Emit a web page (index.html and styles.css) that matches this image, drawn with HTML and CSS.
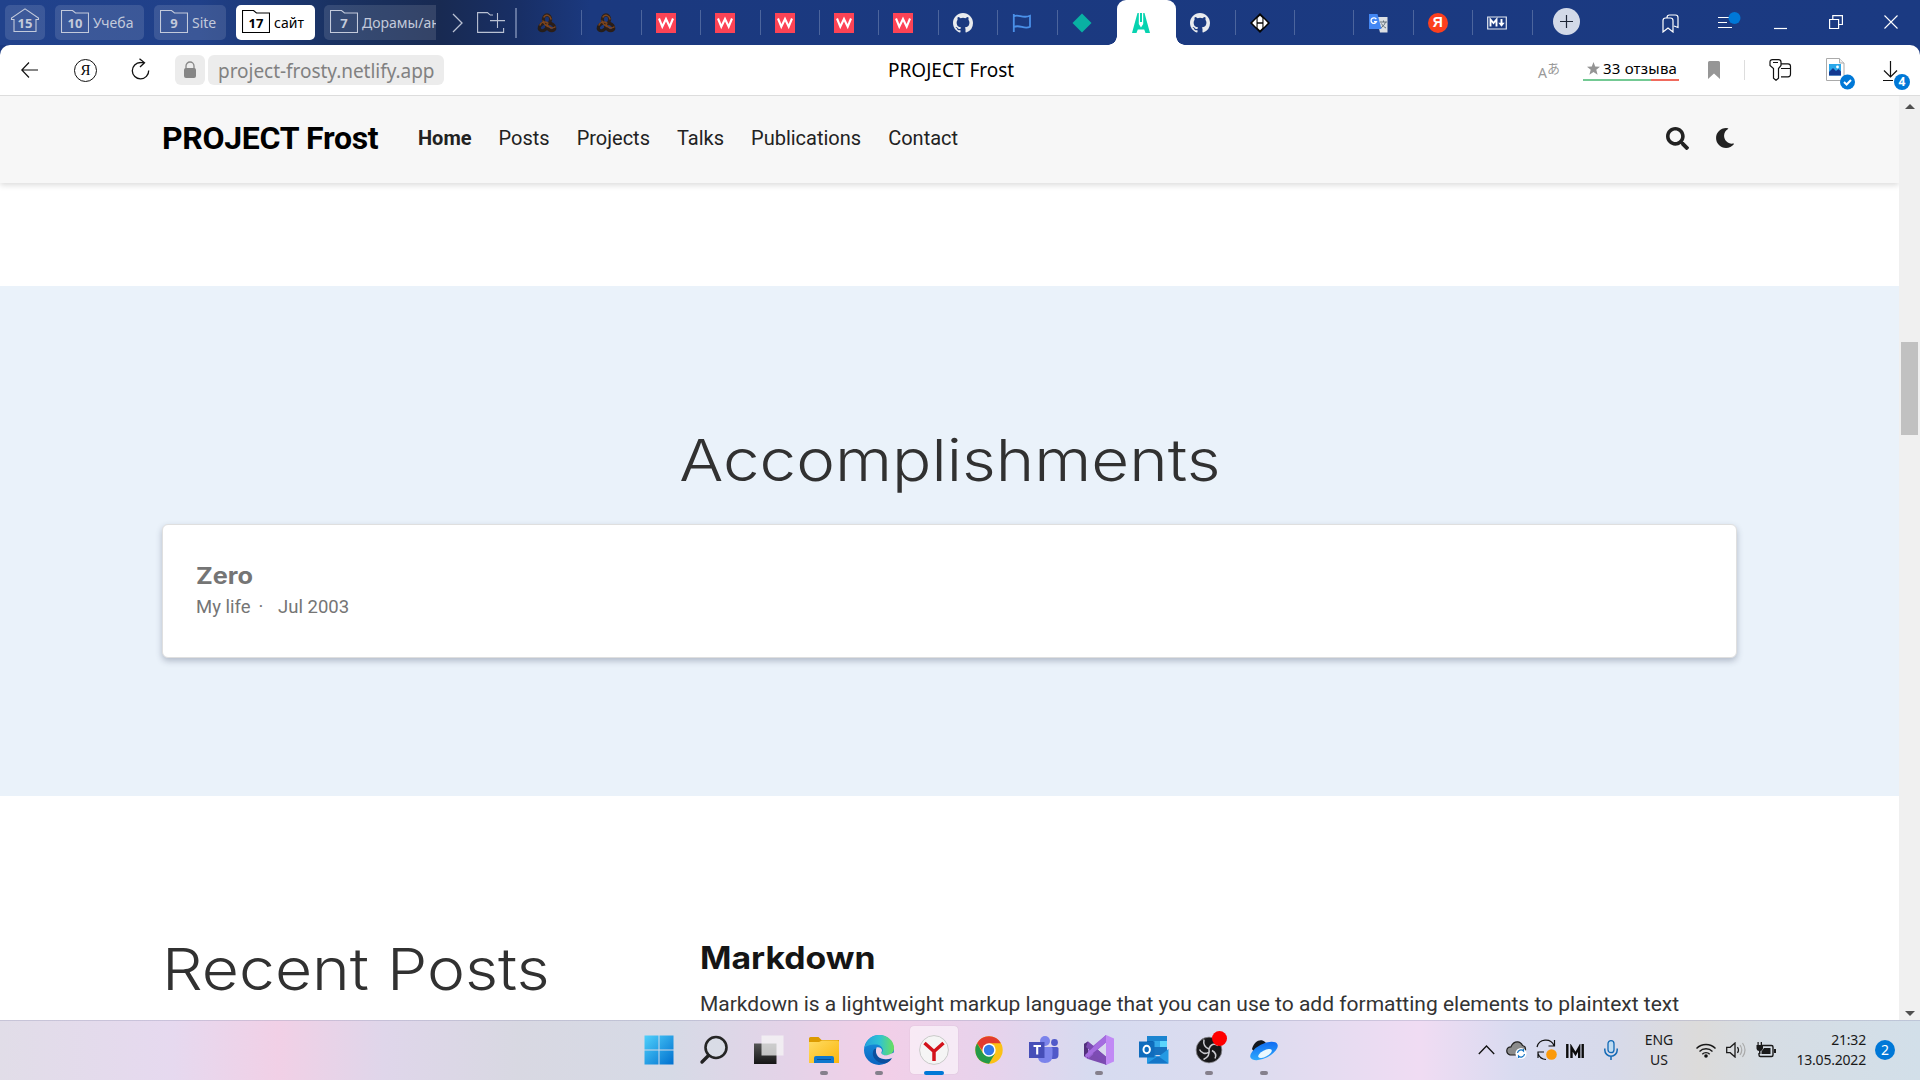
FILE: index.html
```html
<!DOCTYPE html>
<html lang="en">
<head>
<meta charset="utf-8">
<title>PROJECT Frost</title>
<link rel="stylesheet" href="styles.css">
</head>
<body>
<svg class="defs" width="0" height="0">
  <defs>
    <linearGradient id="g-win" x1="0" y1="0" x2="1" y2="1"><stop offset="0" stop-color="#4fd0fb"/><stop offset="1" stop-color="#0070cf"/></linearGradient>
    <linearGradient id="g-dark" x1="0" y1="0" x2="0" y2="1"><stop offset="0" stop-color="#555"/><stop offset="1" stop-color="#151515"/></linearGradient>
    <linearGradient id="g-fold" x1="0" y1="0" x2="1" y2="1"><stop offset="0" stop-color="#ffdc63"/><stop offset="1" stop-color="#fbb60c"/></linearGradient>
    <linearGradient id="g-edge" x1="0" y1="0" x2="1" y2="0"><stop offset="0" stop-color="#24a0dd"/><stop offset=".5" stop-color="#2fc2d4"/><stop offset="1" stop-color="#6be05b"/></linearGradient>
    <linearGradient id="g-edge2" x1="0" y1="0" x2="0" y2="1"><stop offset="0" stop-color="#1a97e0"/><stop offset="1" stop-color="#0a63c0"/></linearGradient>
    <linearGradient id="g-disk" x1="0" y1="1" x2="1" y2="0"><stop offset="0" stop-color="#35b6ff"/><stop offset="1" stop-color="#0a5ff0"/></linearGradient>
    <symbol id="folder" viewBox="0 0 28 24"><path d="M.5 .5h11l3 2.500h13v19.500H.5z" fill="none" stroke="currentColor" stroke-width="1.100"/></symbol>
    <symbol id="github" viewBox="0 0 16 16"><path fill="#e9ebee" d="M8 0C3.580 0 0 3.580 0 8c0 3.540 2.290 6.530 5.470 7.590.4.070.55-.17.55-.38 0-.19-.01-.82-.01-1.490-2.010.37-2.530-.49-2.690-.94-.09-.23-.48-.94-.82-1.130-.28-.15-.68-.52-.01-.53.63-.01 1.080.58 1.230.82.72 1.210 1.870.87 2.330.66.07-.52.28-.87.51-1.070-1.780-.2-3.640-.89-3.640-3.950 0-.87.31-1.590.82-2.150-.08-.2-.36-1.020.08-2.120 0 0 .67-.21 2.200.82a7.600 7.600 0 0 1 4 0c1.530-1.040 2.200-.82 2.200-.82.44 1.100.16 1.920.08 2.120.51.56.82 1.270.82 2.150 0 3.070-1.870 3.750-3.650 3.950.29.25.54.73.54 1.480 0 1.070-.01 1.930-.01 2.200 0 .21.15.46.55.38A8.010 8.010 0 0 0 16 8c0-4.420-3.580-8-8-8z"/></symbol>
    <symbol id="wsite" viewBox="0 0 20 20"><path fill="#fd4355" d="M0 0h20v20H0z"/><path d="M3 5.500l3.300 8.200L10 6l3.700 7.700L17 5.500" fill="none" stroke="#fff" stroke-width="2.100"/></symbol>
    <symbol id="knot" viewBox="0 0 20 20"><g fill="none" stroke-linecap="round"><ellipse cx="10" cy="6.300" rx="3.600" ry="4.400" stroke="#2e211a" stroke-width="3.200"/><ellipse cx="6.300" cy="14" rx="4.400" ry="3.200" transform="rotate(-35 6.300 14)" stroke="#251d1a" stroke-width="3.200"/><ellipse cx="13.700" cy="14" rx="4.400" ry="3.200" transform="rotate(35 13.700 14)" stroke="#2b1d17" stroke-width="3.200"/><path d="M7 4c2-3 6-2 7 2M3 12c1-3 5-4 8-2M10 11c2 4 5 5 8 3M6 8c1 3 4 6 7 6" stroke="#7c451f" stroke-width="1.500"/></g></symbol>
  </defs>
</svg>

<div class="screen">
  <header class="tabstrip">
    <div class="group group-home"><svg width="30" height="25" viewBox="0 0 30 25"><path d="M1.500 11.500V10L15 .8 28.500 10v1.500H26V23.500H4V11.500z" fill="none" stroke="currentColor" stroke-width="1.100"/></svg><b>15</b></div>
    <div class="group g1"><span class="count"><svg><use href="#folder"/></svg><b>10</b></span><span class="label">Учеба</span></div>
    <div class="group g2"><span class="count"><svg><use href="#folder"/></svg><b>9</b></span><span class="label">Site</span></div>
    <div class="group g3 selected"><span class="count"><svg><use href="#folder"/></svg><b>17</b></span><span class="label">сайт</span></div>
    <div class="group g4"><span class="count"><svg><use href="#folder"/></svg><b>7</b></span><span class="label">Дорамы/ан</span></div>
    <svg class="next" width="11" height="20" viewBox="0 0 11 20"><path d="M1 1l9 9-9 9" fill="none" stroke="#b9c1d3" stroke-width="1.300"/></svg>
    <svg class="addgroup" width="29" height="22" viewBox="0 0 29 22"><path d="M13 2.800L10.500.6H.6v19.800h26V16M16 3h-3M20.500 1v15M13 8.600h15" fill="none" stroke="#b9c1d3" stroke-width="1.100"/></svg>
    <nav class="tabs">
      <div class="tab"><svg><use href="#knot"/></svg></div>
      <div class="tab"><svg><use href="#knot"/></svg></div>
      <div class="tab"><svg><use href="#wsite"/></svg></div>
      <div class="tab"><svg><use href="#wsite"/></svg></div>
      <div class="tab"><svg><use href="#wsite"/></svg></div>
      <div class="tab"><svg><use href="#wsite"/></svg></div>
      <div class="tab"><svg><use href="#wsite"/></svg></div>
      <div class="tab"><svg><use href="#github"/></svg></div>
      <div class="tab"><svg viewBox="0 0 20 20"><path d="M1.800 1v18M1.800 3.500c4-3 9 2.500 16.200-.7v11C12 17 8 11 1.800 14" fill="none" stroke="#4a90e8" stroke-width="1.800"/></svg></div>
      <div class="tab last"><svg viewBox="0 0 20 20"><path d="M10 .5l9.500 9.500-9.500 9.500L.5 10z" fill="#09b1a3"/></svg></div>
      <div class="tab active"><svg viewBox="0 0 20 20"><path d="M6.500 0L1 20h4.500l1.300-3.500h6.400l1.300 3.500H19L13.500 0h-1.300v11L10 14.500 7.800 11V0zM9 0h2v9H9z" fill="#07d3b0"/></svg></div>
      <div class="tab"><svg><use href="#github"/></svg></div>
      <div class="tab"><svg viewBox="0 0 20 20"><path d="M10 0l10 10-10 10L0 10z" fill="#050505"/><path d="M6.500 5.500v9L2.200 10zM13.500 5.500v9l4.300-4.500z" fill="#fff"/><path d="M10 2.800L12.400 5v4.200H7.600V5zM7.600 10.800h4.800V15L10 17.200 7.600 15z" fill="#fff"/></svg></div>
      <div class="tab"></div>
      <div class="tab"><svg viewBox="0 0 20 20"><path d="M8 4h11.500v15.500H12z" fill="#dcdfe3"/><path d="M12 9h7M15.500 7.500V9M17.500 9c-1 3-3 5-5 6M13.500 10.500c1 2 2.500 3.500 4.500 4.500" stroke="#63717b" fill="none"/><path d="M1 1h8.500l4 15H1z" fill="#4387f4"/><path d="M8.300 6.200A2.800 2.800 0 1 0 8.500 8.600H6" fill="none" stroke="#fff" stroke-width="1.300"/></svg></div>
      <div class="tab"><span class="ya-tab">Я</span></div>
      <div class="tab"><svg viewBox="0 0 20 20"><path d="M.7 4h18.600v12H.7z" fill="none" stroke="#e4e8f0" stroke-width="1.200"/><path d="M3.500 13.500v-7L6.500 10l3-3.500v7M14.500 6v4" fill="none" stroke="#fff" stroke-width="1.900"/><path d="M11.300 9.800h6.400l-3.200 4z" fill="#fff"/></svg></div>
    </nav>
    <svg class="newtab" width="27" height="27" viewBox="0 0 27 27"><circle cx="13.500" cy="13.500" r="13.500" fill="#d2d9e8"/><path d="M7 13.500h13M13.500 7v13" stroke="#1c2536" stroke-width="1.200"/></svg>
    <svg class="win-marks" width="17" height="19" viewBox="0 0 17 19"><path d="M1 6.500q0-2.500 2.500-2.500h5q2.500 0 2.500 2.500V18l-5-4-5 4zM5 3.500Q5 1 7.500 1h6Q16 1 16 3.500v10l-4-1.500" fill="none" stroke="#fff" stroke-width="1.200"/></svg>
    <svg class="win-menu" width="23" height="18" viewBox="0 0 23 18"><path d="M0 5.500h11M0 10.500h9M0 15.500h14" stroke="#fff" stroke-width="1.200"/><circle cx="16.500" cy="6" r="6" fill="#0078d7"/></svg>
    <svg class="win-min" width="13" height="14" viewBox="0 0 13 14"><path d="M0 12.500h13" stroke="#fff" stroke-width="1.200"/></svg>
    <svg class="win-max" width="14" height="14" viewBox="0 0 14 14"><path d="M.6 4.500h9v9h-9zM3.800 4.500V.6h9.600v8.900H9.600" fill="none" stroke="#fff" stroke-width="1.200"/></svg>
    <svg class="win-close" width="14" height="14" viewBox="0 0 14 14"><path d="M.5.5l13 13M13.500.5l-13 13" stroke="#fff" stroke-width="1.100"/></svg>
  </header>

  <div class="toolbar">
    <svg class="t-back" width="17" height="16" viewBox="0 0 17 16"><path d="M8 .5L.8 8 8 15.500M1 8h16" fill="none" stroke="#111" stroke-width="1.200"/></svg>
    <span class="t-ya">Я</span>
    <svg class="t-reload" width="19" height="22" viewBox="0 0 19 22"><path d="M9.500 4.500A8.200 8.200 0 1 0 17.700 12.500M8.500.7l5 4-4.500 4.200M13.500 4.600h-4" fill="none" stroke="#111" stroke-width="1.300"/></svg>
    <span class="t-lock"><svg width="14" height="18" viewBox="0 0 14 18"><path d="M3 8V5a4 4 0 0 1 8 0v3" fill="none" stroke="#888" stroke-width="1.300"/><rect x="1" y="7" width="12" height="10" rx="2" fill="#868686"/></svg></span>
    <span class="t-url">project-frosty.netlify.app</span>
    <span class="t-title">PROJECT Frost</span>
    <span class="t-trans"><span>A</span><sup>あ</sup></span>
    <span class="t-rating"><svg width="13" height="13" viewBox="0 0 13 13"><path d="M6.500 0l1.700 4.500 4.800.3-3.700 3 1.300 4.900-4.100-2.700-4.100 2.700 1.300-4.900L0 4.800l4.800-.3z" fill="#949494"/></svg><span>33 отзыва</span></span>
    <svg class="t-mark" width="12" height="18" viewBox="0 0 12 18"><path d="M0 1.500Q0 0 1.500 0h9Q12 0 12 1.500V18l-6-5.500L0 18z" fill="#969696"/></svg>
    <span class="t-sep"></span>
    <svg class="t-key" width="23" height="22" viewBox="0 0 23 22"><path d="M1 3Q1 .7 3.500.7h6Q12 .7 12 3v3.500L9.500 9.500v9.800L7 21.300 4.500 19.300V9.500L1 6.500zM4 3.500h5M12 4.800h7q2.500 0 2.500 2.500v8q0 2.500-2.500 2.500h-7M12 9.500h9.500" fill="none" stroke="#111" stroke-width="1.200"/></svg>
    <svg class="t-img" width="30" height="32" viewBox="0 0 30 32"><path d="M.5.500h13l4.500 4.500v17.500H.5z" fill="#fff" stroke="#aaa"/><path d="M13.500.500V5H18" fill="#eee" stroke="#aaa"/><path d="M3 6h12v11.500H3z" fill="#29a7ea"/><path d="M3 14l4-4 3 3 2.500-2 2.500 2.500v4H3z" fill="#143a91"/><circle cx="11.500" cy="9" r="1.400" fill="#fff"/><circle cx="21.500" cy="24" r="7.500" fill="#0078d7"/><path d="M18 24l2.600 2.500L25 22" fill="none" stroke="#fff" stroke-width="2"/></svg>
    <span class="t-down"><svg width="15" height="21" viewBox="0 0 15 21"><path d="M7.500 0v16M1 9.500L7.500 16 14 9.500M0 19.500h10" fill="none" stroke="#111" stroke-width="1.200"/></svg><b>4</b></span>
  </div>

  <main class="viewport">
    <div class="page">
      <nav class="navbar">
        <span class="brand">PROJECT Frost</span>
        <ul class="menu">
          <li class="current">Home</li><li>Posts</li><li>Projects</li><li>Talks</li><li>Publications</li><li>Contact</li>
        </ul>
        <svg class="n-search" width="23" height="23" viewBox="0 0 512 512"><path fill="#222" d="M505 442.700L405.300 343c-4.500-4.500-10.600-7-17-7H372c27.600-35.300 44-79.700 44-128C416 93.100 322.900 0 208 0S0 93.100 0 208s93.100 208 208 208c48.300 0 92.700-16.400 128-44v16.300c0 6.400 2.500 12.500 7 17l99.700 99.700c9.400 9.400 24.600 9.400 33.900 0l28.300-28.300c9.400-9.400 9.400-24.600.1-34zM208 336c-70.700 0-128-57.200-128-128 0-70.700 57.200-128 128-128 70.700 0 128 57.200 128 128 0 70.700-57.200 128-128 128z"/></svg>
        <svg class="n-moon" width="20" height="20" viewBox="0 0 512 512"><path fill="#222" d="M283.211 512c78.962 0 151.079-35.925 198.857-94.792 7.068-8.708-.639-21.430-11.562-19.350-124.203 23.654-238.262-71.576-238.262-196.954 0-72.222 38.662-138.635 101.498-174.394 9.686-5.512 7.250-20.197-3.756-22.230A258.156 258.156 0 0 0 283.211 0c-141.309 0-256 114.511-256 256 0 141.309 114.511 256 256 256z"/></svg>
      </nav>
      <section class="accomplishments">
        <h1><span>Accomplishments</span></h1>
        <article class="card">
          <h3><span>Zero</span></h3>
          <p><span>My life</span><span class="dot">·</span><span>Jul 2003</span></p>
        </article>
      </section>
      <section class="posts">
        <h1><span>Recent Posts</span></h1>
        <article class="post">
          <h3><span>Markdown</span></h3>
          <p>Markdown is a lightweight markup language that you can use to add formatting elements to plaintext text</p>
        </article>
      </section>
    </div>
    <div class="scrollbar"><i class="up"></i><i class="thumb"></i><i class="down"></i></div>
  </main>

  <footer class="taskbar">
    <div class="apps">
      <div class="app"><svg viewBox="0 0 30 30"><path d="M.5.500h14v14H.5zM15.500.500h14v14h-14zM.5 15.500h14v14H.5zM15.500 15.500h14v14h-14z" fill="url(#g-win)"/></svg></div>
      <div class="app"><svg viewBox="0 0 30 30"><circle cx="17" cy="12.500" r="10.500" fill="#d9dce6" stroke="#252525" stroke-width="2.600"/><path d="M9.500 20.500l-6.500 6.500" stroke="#222" stroke-width="3.400" stroke-linecap="round"/></svg></div>
      <div class="app"><svg viewBox="0 0 30 30"><path d="M0 8.500h22.500V29H0z" fill="url(#g-dark)"/><path d="M7.500 0.500h22V20.500h-22z" fill="#f6f6f6" opacity=".75"/></svg></div>
      <div class="app run"><svg viewBox="0 0 30 30"><path d="M0 3.500Q0 2 1.500 2h8l3 3H30v5H0z" fill="#dc9b00"/><path d="M0 7h10l3-1.500h15.500Q30 5.500 30 7v21H0z" fill="url(#g-fold)"/><path d="M5 28v-5q0-2 2-2h16q2 0 2 2v5z" fill="#0f77cd"/><path d="M8 24.500h14" stroke="#064f94"/></svg></div>
      <div class="app run"><svg viewBox="0 0 30 30"><circle cx="15" cy="15" r="15" fill="url(#g-edge2)"/><path d="M.3 13C2 5 8 0 15 0c9 0 15 6 15 13 0 5-4 7.500-8 7.500-3 0-4.500-1.200-4.500-2.200 0-.8 1.300-1.300 1.300-3.300 0-3-3-5.500-7-5.500C6 9.500 2 11 .3 13z" fill="url(#g-edge)"/><path d="M10.500 14c-2 2-2.500 6 0 9.500s7 5.500 12 4.500c2.500-1 4.500-3 5.500-5-6 3-13 1-15-3-1-2-1-4.500.5-6.500z" fill="#0b4f9e"/><path d="M12.500 12.500c3 -.8 5.500 1 5.500 3 0 1-1 2-.5 3 1 1.800 4 2 6.500 1.500l6-2.500v3l-2 2.500c-5 2-11 1.500-14-1.500-2-2.500-2.700-5.500-1.500-9z" fill="#edd0ea"/></svg></div>
      <div class="app run open"><svg viewBox="0 0 30 30"><circle cx="15" cy="15" r="14.400" fill="#f5f5f5" stroke="#c9c9c9"/><path d="M15 26V16.500M5.500 8l9.500 8.500L24.500 8" fill="none" stroke="#d3121b" stroke-width="3.500"/></svg></div>
      <div class="app"><svg viewBox="0 0 30 30"><circle cx="15" cy="15" r="13.700" fill="#fbc116"/><path d="M3.100 8.200A13.700 13.700 0 0 1 26.900 8.200H15L10 18z" fill="#e33b2e"/><path d="M3.100 8.200A13.700 13.700 0 0 0 15 28.700L21 18.500 9 18.300z" fill="#249a48"/><circle cx="15" cy="15" r="6.700" fill="#fff"/><circle cx="15" cy="15" r="5.200" fill="#3379e6"/></svg></div>
      <div class="app"><svg viewBox="0 0 30 30"><circle cx="16" cy="6" r="5" fill="#7b83eb"/><circle cx="25.500" cy="7.500" r="3.400" fill="#5059c9"/><path d="M22 12h6q1.500 0 1.500 1.500V20q0 4-4.500 4h-3z" fill="#5059c9"/><path d="M9 12h13q1.500 0 1.500 1.500V20q0 8-7.500 8T9 20z" fill="#7b83eb"/><path d="M0 7h15.500v16H0z" fill="#464eb8"/><path d="M4.500 11h7.500M8.200 11v8.500" stroke="#fff" stroke-width="2.100"/></svg></div>
      <div class="app run"><svg viewBox="0 0 30 30"><path d="M0 9l4-2.500L23 22v8L4 24 0 21z" fill="#7c4cb0"/><path d="M4 11.500L9.500 16 4 19z" fill="#d9d9ee"/><path d="M0 21l4 3L22 7.500V0L3 16z" fill="#9a62d4"/><path d="M0 9l4-2.500V23L0 21z" fill="#52307c"/><path d="M22 0l8 3.500v23L22 30z" fill="#c18af5"/><path d="M14 14.500L22 8v13.500z" fill="#d9d9ee"/><path d="M4 6.500L22 22v8L2 12z" fill="#7d4cb4"/><path d="M2 23.500L22 7.500V0L1 20z" fill="#a56de0"/></svg></div>
      <div class="app"><svg viewBox="0 0 30 30"><path d="M8 1h20v17H8z" fill="#1b84d0"/><path d="M8 6h6.500v6H8z" fill="#0b5fae"/><path d="M14.500 6H21v6h-6.500z" fill="#34a8ea"/><path d="M21 6h7v6h-7z" fill="#5bd5fc"/><path d="M8 12h20v8H8z" fill="#1672c0"/><path d="M8 28.500V15l11 7 10.500-8v14.500z" fill="#2499e3"/><path d="M19 21l10.500 7.500H8z" fill="#1476c8"/><path d="M0 6.500h15.500v16H0z" fill="#0f6cbd"/><ellipse cx="7.700" cy="14.500" rx="3.200" ry="3.700" fill="none" stroke="#fff" stroke-width="2"/></svg></div>
      <div class="app run"><svg viewBox="0 3.500 30 30"><circle cx="15" cy="18.500" r="12.900" fill="#18181a" stroke="#8f8f95" stroke-width=".8"/><path d="M10 8c-1 5 1 8 5 9.500M15 17.500c1.500-5 5-6 9-3.500M15 17.500c1 5-1 8.500-5.500 10.500M5.500 18c2 4 6 5 9.500 2.500M21 27c1.500-3 .5-6-3-8" fill="none" stroke="#c9c9ce" stroke-width="1.500"/></svg><i class="rec"></i></div>
      <div class="app run"><svg viewBox="0 0 30 30"><path d="M3 14C5 6 12 3 16 7l4 4-12 10z" fill="#14181f"/><ellipse cx="15" cy="16" rx="15" ry="7" transform="rotate(-27 15 16)" fill="url(#g-disk)"/><ellipse cx="16" cy="18.500" rx="7.500" ry="3.200" transform="rotate(-28 16 18.500)" fill="#eaf9ff"/></svg></div>
    </div>
    <div class="tray">
      <svg class="y1" width="17" height="10" viewBox="0 0 17 10"><path d="M.8 9L8.500 1l7.700 8" fill="none" stroke="#111" stroke-width="1.300"/></svg>
      <svg class="y2" width="21" height="18" viewBox="0 0 21 18"><path d="M4 14Q.5 13 .8 9.500 1 6 5 5.800 7 .7 11.500.8 15 1 16.500 4.500 20 5 19.500 9L10 14z" fill="#8b8b8b" stroke="#222" stroke-width="1.200"/><circle cx="15" cy="12.500" r="5.500" fill="#fff"/><path d="M11.500 12a3.500 3.500 0 0 1 6-2V8M18.500 13a3.500 3.500 0 0 1-6 2v2" fill="none" stroke="#1373c4" stroke-width="1.200"/></svg>
      <svg class="y3" width="21" height="22" viewBox="0 0 21 22"><path d="M1 8a9 9 0 0 1 17-1.500M18.500 1v6h-6M2 19v-6h6M2 14.500a9 9 0 0 0 8 6" fill="none" stroke="#111" stroke-width="1.200"/><circle cx="15.500" cy="15.500" r="5.300" fill="#fb9a0b"/></svg>
      <svg class="y4" width="18" height="15" viewBox="0 0 18 15"><path d="M1.300 0v14M5.500 14V3.500L9.500 10l3.700-6.500V14M16.700 0v14" fill="none" stroke="#0c0c0c" stroke-width="2.400"/></svg>
      <svg class="y5" width="14" height="20" viewBox="0 0 14 20"><rect x="4" y=".7" width="6" height="12" rx="3" fill="#bfdcf3" stroke="#1269b5" stroke-width="1.300"/><path d="M.8 8.500v1.500a6.200 6.200 0 0 0 12.400 0V8.500M7 16v4" fill="none" stroke="#1269b5" stroke-width="1.500"/></svg>
      <div class="lang"><span>ENG</span><span>US</span></div>
      <svg class="y6" width="20" height="15" viewBox="0 0 20 15"><g fill="none" stroke="#1a1a1a" stroke-width="1.400"><path d="M.5 5.500a13.300 13.300 0 0 1 19 0M3.500 8.500a9.200 9.200 0 0 1 13 0M6.300 11.200a5.200 5.200 0 0 1 7.400 0"/></g><circle cx="10" cy="13" r="1.800" fill="#111"/></svg>
      <svg class="y7" width="20" height="16" viewBox="0 0 20 16"><path d="M.7 5.300h3.500L9 1v14l-4.800-4.300H.7z" fill="none" stroke="#1a1a1a" stroke-width="1.300"/><path d="M11.500 5q2 3 0 6" fill="none" stroke="#1a1a1a" stroke-width="1.200"/><path d="M14 3q3.500 5 0 10M16.500 1q5 7 0 14" fill="none" stroke="#aaa" stroke-width="1.200"/></svg>
      <svg class="y8" width="20" height="16" viewBox="0 0 20 16"><path d="M6 3.500h9.500q1.500 0 1.500 1.500v8q0 1.500-1.500 1.500h-11Q3 14.500 3 13v-2" fill="none" stroke="#1a1a1a" stroke-width="1.400"/><path d="M8 6h6.500v6H5.500V9.500zM18 7h2v4h-2zM1.500 0h1.200v3h2V0H6v3h1v3.500Q6 9 4.500 9v3H3V9Q.500 8.500 .5 6.500V3h1z" fill="#1a1a1a"/></svg>
      <div class="clock"><span>21:32</span><span>13.05.2022</span></div>
      <b class="notif">2</b>
    </div>
  </footer>
</div>
</body>
</html>
```

FILE: styles.css
```css
* { box-sizing: border-box; }
body { margin: 0; background: #1b3a82; font-family: Roboto, "Liberation Sans", sans-serif; overflow: hidden; }
h1, h3, p, ul { margin: 0; padding: 0; font-weight: inherit; }
svg { display: block; flex: none; }
.defs { position: absolute; }
.screen { width: 1920px; height: 1080px; display: flex; flex-direction: column; overflow: hidden; }
.screen span { white-space: nowrap; }

/* Tab strip */
.tabstrip { height: 45px; flex: none; display: flex; align-items: flex-start; font-family: "Noto Sans", sans-serif; color: #c3cadb; background: linear-gradient(90deg, #21428c 0, #204089 200px, #1a3263 330px, #182a52 440px, #182f66 520px, #1b397f 590px, #1b3a82 100%); }
.group { height: 35px; margin-top: 5px; border-radius: 5px; background: rgba(255,255,255,.12); display: flex; align-items: center; padding-left: 6px; overflow: hidden; flex: none; }
.group b { font: 700 13px/1 "Noto Sans", sans-serif; }
.group-home { width: 40px; margin-left: 5px; padding: 0; display: grid; place-items: center; }
.group-home > * { grid-area: 1 / 1; }
.group-home svg { margin-bottom: 4px; }
.group-home b { margin-top: 2px; }
.count { width: 28px; height: 24px; display: grid; place-items: center; flex: none; margin-bottom: 1px; }
.count > * { grid-area: 1 / 1; }
.count svg { width: 28px; height: 24px; }
.count b { margin-top: 3px; }
.label { margin-left: 4px; font-size: 14px; line-height: 20px; margin-top: 1px; }
.g1 { width: 89px; margin-left: 10px; }
.g2 { width: 72px; margin-left: 10px; }
.g3 { width: 79px; margin-left: 10px; }
.g4 { width: 112px; margin-left: 9px; border-radius: 5px 0 0 5px; }
.selected { background: #fff; color: #000; }
.next { margin: 13px 0 0 16px; }
.addgroup { margin: 12px 0 0 14px; }
.tabs { display: flex; margin-left: 9px; padding-left: 6px; position: relative; height: 45px; width: 1017px; flex: none; }
.tabs::before { content: ""; width: 2px; height: 30px; background: #62749f; margin: 8px 0 0 -6px; flex: none; }
.tab { width: 59.400px; flex: none; height: 45px; padding: 13px 0 0 14px; display: flex; position: relative; }
.tab:first-child { margin-left: 6px; }
.tab::after { content: ""; position: absolute; right: 0; top: 10px; width: 1px; height: 25px; background: #4c659d; }
.tab.last::after, .tab.active::after { display: none; }
.tab svg { width: 20px; height: 20px; }
.tab.active { background: #fff; border-radius: 9px 9px 0 0; }
.tab.active::before { content: ""; position: absolute; left: -9px; right: -9px; bottom: 0; height: 9px; background: radial-gradient(circle at 0 0, transparent 8.500px, #fff 9px) left / 9px 9px no-repeat, radial-gradient(circle at 100% 0, transparent 8.500px, #fff 9px) right / 9px 9px no-repeat; }
.ya-tab { width: 20px; height: 20px; border-radius: 50%; background: #fc3f1d; color: #fff; font: 700 14px/19px "Liberation Sans", sans-serif; text-align: center; }
.newtab { margin: 8px 0 0 21px; }
.win-marks { margin: 14px 0 0 82px; }
.win-menu { margin: 12px 0 0 39px; }
.win-min { margin: 16px 0 0 33px; }
.win-max { margin: 15px 0 0 42px; }
.win-close { margin: 15px 0 0 41px; }

/* Address bar */
.toolbar { height: 51px; flex: none; background: #fff; border-bottom: 1px solid #ddd; border-radius: 10px 10px 0 0; display: flex; align-items: flex-start; font-family: "Noto Sans", sans-serif; }
.t-back { margin: 17px 0 0 21px; }
.t-ya { width: 23px; height: 23px; margin: 14px 0 0 36px; border: 1.300px solid #111; border-radius: 50%; text-align: center; font: 15px/20px "Liberation Serif", serif; flex: none; }
.t-reload { margin: 13px 0 0 34px; }
.t-lock { width: 30px; height: 30px; border-radius: 6px; background: #ececec; margin: 10px 0 0 25px; display: grid; place-items: center; flex: none; }
.t-url { width: 236px; height: 30px; border-radius: 6px; background: #ececec; margin: 10px 0 0 3px; padding-left: 10px; font-size: 19px; line-height: 32px; letter-spacing: -.04px; color: #818181; flex: none; }
.t-title { width: 650px; margin-left: 444px; line-height: 51px; font-size: 19px; color: #000; flex: none; }
.t-trans { display: flex; color: #999; font-size: 14px; line-height: 14px; margin: 21px 0 0; width: 45px; flex: none; }
.t-trans sup { font: 13px/13px "Noto Sans CJK JP", sans-serif; margin-top: -5px; }
.t-rating { width: 96px; height: 36px; flex: none; display: flex; align-items: center; gap: 3px; padding: 12px 0 0 4px; font-size: 15px; line-height: 22px; letter-spacing: .2px; border-bottom: 2px solid; border-image: linear-gradient(90deg, #73c993 70%, #f06a5d 70%) 1; }
.t-mark { margin: 16px 0 0 29px; }
.t-sep { width: 1px; height: 20px; background: #ddd; margin: 15px 0 0 24px; flex: none; }
.t-key { margin: 14px 0 0 24px; }
.t-img { margin: 13px 0 0 34px; }
.t-down { position: relative; margin: 16px 0 0 27px; }
.t-down b, .notif { background: #0078d7; color: #fff; border-radius: 50%; text-align: center; }
.t-down b { position: absolute; left: 11px; top: 13px; width: 16px; height: 16px; font: 700 12px/16px "Noto Sans", sans-serif; }

/* Page */
.viewport { height: 924px; flex: none; display: flex; }
.page { width: 1899px; overflow: hidden; background: #fff; display: flex; flex-direction: column; }
.navbar { height: 87px; flex: none; background: #f7f7f7; box-shadow: 0 2px 6px rgba(0,0,0,.15); display: flex; align-items: center; padding: 0 164px 3px 162px; color: #222; }
.brand { width: 256px; font-size: 32px; font-weight: 700; color: #000; line-height: 40px; letter-spacing: -.3px; }
.menu { display: flex; list-style: none; gap: 27px; font-size: 20px; line-height: 26px; flex: 1; }
.current { font-weight: 700; }
.n-moon { margin-left: 26px; }
.accomplishments { margin-top: 103px; height: 510px; flex: none; background: #eaf2fa; padding: 136px 162px 0; }
h1 { font: 300 58px/77px Inter, sans-serif; color: #313131; }
h1 span, h3 span { display: inline-block; transform-origin: 0 50%; }
.accomplishments h1 { text-align: center; }
.accomplishments h1 span { transform: scaleX(1.128); transform-origin: 50% 50%; }
.card { margin-top: 25px; height: 134px; background: #fff; border: 1px solid #dfdfdf; border-radius: 6px; box-shadow: 0 3px 6px rgba(50,60,90,.3); padding: 34px 33px; color: #757575; }
.card h3 { font: 700 23px/34px Inter, sans-serif; }
.card h3 span { transform: scaleX(1.1); }
.card p { font-size: 18.500px; line-height: 29px; display: flex; }
.dot { width: 27.500px; padding-left: 8px; }
.posts { display: flex; padding: 135px 162px 0; }
.posts h1 { width: 538px; }
.posts h1 span { transform: scaleX(1.106); }
.post h3 { font: 700 31px/54px Inter, sans-serif; color: #151515; }
.post h3 span { transform: scaleX(1.09); }
.post p { font-size: 21px; line-height: 30px; margin-top: 4px; color: #333; white-space: nowrap; }

.scrollbar { width: 21px; background: #f0f0f0; display: flex; flex-direction: column; align-items: center; padding: 8px 0 4px; }
.up, .down { border: 5px solid transparent; width: 0; height: 0; }
.up { border-bottom-color: #505050; border-top-width: 0; }
.down { border-top-color: #505050; border-bottom-width: 0; margin-top: auto; }
.thumb { width: 17px; height: 93px; background: #c1c1c1; margin-top: 233px; }

/* Taskbar */
.taskbar { height: 60px; flex: none; display: flex; border-top: 1px solid rgba(160,160,190,.4); background: linear-gradient(90deg, #e1dde8 0, #e6d9ef 9%, #f1d0e6 14.500%, #dfd6ea 20%, #d8d8e2 27%, #d6dae6 35%, #e4d3e8 41%, #f2cfe8 46%, #e6d3ec 52%, #d6dbf0 57%, #dcdcef 65%, #f0dcf3 74%, #d8dbf0 79%, #d7daea 84%, #dcdbda 88.500%, #d6dde4 92%, #d2dfe9 100%); }
.apps { display: flex; width: 846px; margin-left: 631px; flex: none; }
.app { width: 55px; height: 59px; position: relative; display: grid; place-items: center; padding-bottom: 1px; flex: none; }
.app svg { width: 30px; height: 30px; z-index: 1; }
.app.run::after { content: ""; position: absolute; bottom: 5px; left: 24px; width: 8px; height: 4px; border-radius: 2px; background: #85808c; z-index: 1; }
.app.open::before { content: ""; position: absolute; left: 4px; top: 5px; width: 48px; height: 48px; border-radius: 4px; background: rgba(255,255,255,.55); box-shadow: 0 0 1px rgba(0,0,0,.2); }
.app.open::after { left: 18px; width: 20px; background: #0078d7; }
.rec { position: absolute; width: 15px; height: 15px; border-radius: 50%; background: red; left: 31px; top: 10px; z-index: 2; }
.tray { display: flex; align-items: center; color: #1a1a1a; font: 14px/20px "Noto Sans", sans-serif; padding-bottom: 1px; }
.y1 { margin-left: 1px; }
.y2 { margin-left: 11px; }
.y3 { margin-left: 9px; }
.y4 { margin-left: 9px; margin-top: 2px; }
.y5 { margin-left: 20px; }
.lang { width: 30px; margin-left: 26px; display: flex; flex-direction: column; align-items: center; }
.y6 { margin-left: 22px; }
.y7 { margin-left: 10px; }
.y8 { margin-left: 10px; }
.clock { width: 90px; display: flex; flex-direction: column; align-items: flex-end; letter-spacing: -.2px; }
.notif { width: 20px; height: 20px; margin-left: 9px; font: 14px/20px "Noto Sans", sans-serif; }
```
